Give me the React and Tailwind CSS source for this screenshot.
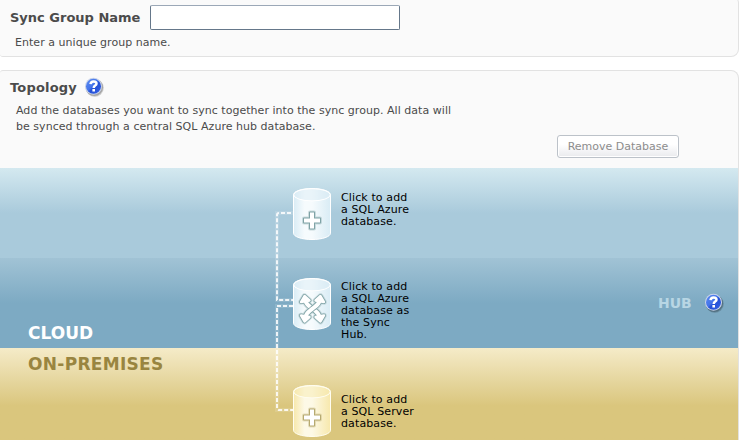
import React from "react";

function HelpIcon({ className }) {
  return (
    <svg className={className} width="22" height="22" viewBox="0 0 22 22">
      <defs>
        <linearGradient id="helpFill" x1="0" y1="0" x2="1" y2="1">
          <stop offset="0" stopColor="#5c8cf0" />
          <stop offset="0.45" stopColor="#4474ea" />
          <stop offset="0.55" stopColor="#2450d6" />
          <stop offset="1" stopColor="#3560e6" />
        </linearGradient>
      </defs>
      <circle cx="11.8" cy="12" r="9" fill="#000" opacity="0.15" />
      <circle cx="11.3" cy="11.3" r="8.8" fill="#000" opacity="0.22" />
      <circle cx="10.5" cy="10.3" r="8.5" fill="#c9d3ea" />
      <circle cx="10.5" cy="10.3" r="7.5" fill="url(#helpFill)" />
      <path d="M7.5 8.1C7.7 6.2 8.9 5.4 10.6 5.4C12.4 5.4 13.5 6.3 13.5 7.7C13.5 9.7 10.7 9.5 10.7 11.9" fill="none" stroke="#fff" strokeWidth="2.5" />
      <rect x="9.4" y="13" width="2.6" height="2.5" fill="#fff" />
    </svg>
  );
}

const CYLINDERS = {
  blue: { edge: "#d9ecf5", mid: "#f6fbfd", outline: "#ffffff", glyph: "#7fa3a6" },
  gold: { edge: "#f7e8ac", mid: "#fdf9e6", outline: "#fffdf0", glyph: "#b7aa70" },
};

function Cylinder({ tone, hub = false }) {
  const c = CYLINDERS[tone];
  const plus = "M17 24.5H21V30.5H27V34.5H21V40.5H17V34.5H11V30.5H17Z";
  const heads = "M11.5 18L16.5 22.5L8 24ZM27.5 18L31 24L22.5 22.5ZM8 37.5L16.5 39L11.5 43.5ZM31 37.5L27.5 43.5L22.5 39Z";
  const falling = "M12.5 22C13 27.5 17.5 28.5 20 31C22.5 33.5 26 34.5 26.5 39.5";
  const rising = "M26.5 22C26 27.5 21.5 28.5 19 31C16.5 33.5 13 34.5 12.5 39.5";
  return (
    <svg className="block shrink-0" width="38" height="52" viewBox="0 0 38 52">
      <defs>
        <linearGradient id={`body-${tone}`} x1="0" x2="1" y1="0" y2="0">
          <stop offset="0" stopColor={c.edge} />
          <stop offset="0.3" stopColor={c.mid} />
          <stop offset="0.5" stopColor={c.mid} />
          <stop offset="1" stopColor={c.edge} />
        </linearGradient>
      </defs>
      <path d="M.5 6.8C.5 3.3 8.8.5 19 .5S37.5 3.3 37.5 6.8V45.2C37.5 48.7 29.2 51.5 19 51.5S.5 48.7.5 45.2Z" fill={`url(#body-${tone})`} stroke={c.outline} />
      <ellipse cx="19" cy="6.8" rx="18.3" ry="6.1" fill={c.edge} fillOpacity="0.45" stroke={c.outline} />
      {hub ? (
        <g strokeLinecap="round" strokeLinejoin="round" fill="none">
          <g stroke={c.glyph} opacity="0.3">
            <path d={heads} strokeWidth="5.6" />
            <path d={`${falling}${rising}`} strokeWidth="7.5" />
          </g>
          <g stroke={c.glyph}>
            <path d={heads} strokeWidth="4" />
            <path d={falling} strokeWidth="5.6" />
          </g>
          <path d={falling} stroke="#fff" strokeWidth="4" />
          <path d={rising} stroke={c.glyph} strokeWidth="5.6" />
          <path d={rising} stroke="#fff" strokeWidth="4" />
          <path d={heads} fill="#fff" stroke="#fff" strokeWidth="2.4" />
        </g>
      ) : (
        <g strokeLinejoin="round">
          <path d={plus} fill={c.glyph} stroke={c.glyph} strokeWidth="4" opacity="0.35" />
          <path d={plus} fill={c.glyph} stroke={c.glyph} strokeWidth="2" />
          <path d={plus} fill="#fff" />
        </g>
      )}
    </svg>
  );
}

function Connectors() {
  return (
    <svg className="pointer-events-none absolute left-[270px] top-0" width="30" height="272" viewBox="0 0 30 272" fill="none">
      <g stroke="#fff" strokeWidth="4" opacity="0.13">
        <path d="M23 45H7V132H23M23 138H7V242H23" />
      </g>
      <g stroke="#fff" strokeWidth="2" strokeDasharray="4 2" opacity="0.85">
        <path d="M21 45H9Q7 45 7 47V132H23" />
        <path d="M23 138H7V240Q7 242 9 242H23" />
      </g>
    </svg>
  );
}

function NodeLabel({ lines, className }) {
  return (
    <div className={`ml-[10px] text-[11px] leading-[12px] tracking-[0.12px] whitespace-nowrap text-black ${className}`}>
      {lines.map((l) => (
        <div key={l}>{l}</div>
      ))}
    </div>
  );
}

export default function App() {
  return (
    <div className="h-[440px] w-[740px] overflow-hidden bg-white font-['DejaVu_Sans',sans-serif] text-[#4b4b4b]">
      <section className="-mt-[5px] h-[62px] w-[739px] rounded-l-[3px] rounded-r-[8px] border border-[#e2e2e2] border-l-0 bg-[#fafafa]">
        <div className="flex items-center pt-[9px] pl-[10px]">
          <label htmlFor="group" className="w-[140px] text-[13px] leading-[25px] font-bold whitespace-nowrap">Sync Group Name</label>
          <input id="group" className="h-[25px] w-[250px] rounded-[2px] border border-[#65778a] border-t-[#9ba8b7] bg-white px-1 outline-none" />
        </div>
        <p className="mt-[5px] pl-[15px] text-[11px] leading-[16px] tracking-[0.04px]">Enter a unique group name.</p>
      </section>

      <section className="mt-[13px] h-[400px] w-[739px] overflow-hidden rounded-l-[3px] rounded-r-[8px] border border-[#e2e2e2] border-l-0 bg-[#fafafa]">
        <div className="h-[97px]">
          <div className="flex h-[32px] items-start pl-[10px]">
            <h2 className="w-[73px] pt-[7px] text-[13px] leading-[20px] font-bold tracking-[0.18px]">Topology</h2>
            <HelpIcon className="mt-[5px]" />
          </div>
          <p className="pl-[16px] text-[11px] leading-[16px] tracking-[0.035px] whitespace-nowrap">
            Add the databases you want to sync together into the sync group. All data will
            <br />
            be synced through a central SQL Azure hub database.
          </p>
          <div className="flex pl-[557px]">
            <button className="h-[23px] w-[122px] rounded-[3px] border border-[#bcc2c9] bg-gradient-to-b from-white from-40% to-[#e9eaed] pt-px text-[11px] leading-[20px] whitespace-nowrap text-[#8d8d8d] shadow-[inset_0_0_0_1px_#fff]">Remove Database</button>
          </div>
        </div>

        <div className="relative">
          <div className="flex h-[90px] bg-gradient-to-b from-[#d4e9f0] to-[#a9cadb] to-50% pt-[20px] pl-[293px]">
            <Cylinder tone="blue" />
            <NodeLabel className="pt-[4px]" lines={["Click to add", "a SQL Azure", "database."]} />
          </div>
          <div className="flex h-[90px] bg-gradient-to-b from-[#a1c3d5] to-[#7daac3] to-50%">
            <div className="flex w-[293px] items-end pb-[5px] pl-[28px] text-[17px] leading-[20px] font-bold text-white">CLOUD</div>
            <div className="flex w-[365px] pt-[20px]">
              <Cylinder tone="blue" hub />
              <NodeLabel className="pt-[3px]" lines={["Click to add", "a SQL Azure", "database as", "the Sync", "Hub."]} />
            </div>
            <div className="flex h-[90px] items-center text-[14px] font-bold text-[#b8d6e4]">
              <span className="w-[45px]">HUB</span>
              <HelpIcon />
            </div>
          </div>
          <div className="flex h-[120px] bg-gradient-to-b from-[#f5ebc8] to-[#dac67d] to-48%">
            <div className="w-[293px] pt-[6px] pl-[28px] text-[17px] leading-[20px] font-bold tracking-[0.3px] text-[#998540]">ON-PREMISES</div>
            <div className="flex pt-[37px]">
              <Cylinder tone="gold" />
              <NodeLabel className="pt-[9px]" lines={["Click to add", "a SQL Server", "database."]} />
            </div>
          </div>
          <Connectors />
        </div>
      </section>
    </div>
  );
}
